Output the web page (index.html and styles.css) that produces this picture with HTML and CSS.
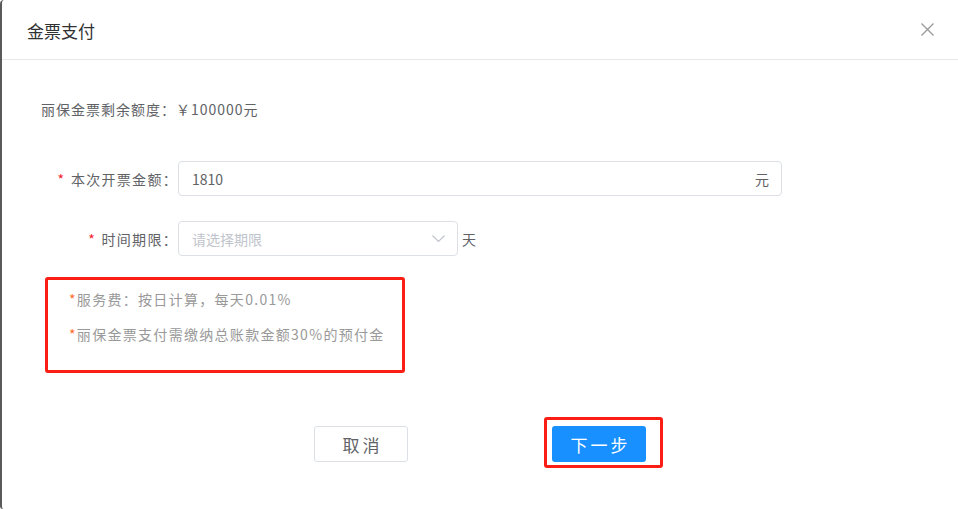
FILE: index.html
```html
<!DOCTYPE html>
<html lang="zh-CN">
<head>
    <meta charset="UTF-8">
    <meta name="viewport" content="width=device-width, initial-scale=1.0">
    <title>金票支付</title>
    <link rel="stylesheet" href="styles.css">
</head>
<body>
    <div class="dialog">
        <header class="dialog-header">
            <span class="dialog-title">金票支付</span>
            <button class="dialog-close" aria-label="关闭">
                <svg width="13" height="13" viewBox="0 0 13 13">
                    <path d="M0.5 0.5 L12.5 12.5 M12.5 0.5 L0.5 12.5" stroke="#999" stroke-width="1.3" fill="none"/>
                </svg>
            </button>
        </header>

        <main class="dialog-body">
            <p class="balance">丽保金票剩余额度：￥100000元</p>

            <div class="form-row">
                <label class="form-label"><span class="req">*</span> 本次开票金额：</label>
                <div class="input wide">
                    <span class="input-value">1810</span>
                    <span class="input-suffix">元</span>
                </div>
            </div>

            <div class="form-row">
                <label class="form-label"><span class="req">*</span> 时间期限：</label>
                <div class="input narrow">
                    <span class="input-placeholder">请选择期限</span>
                    <svg class="arrow" width="13" height="8" viewBox="0 0 13 8">
                        <path d="M0.5 0.5 L6.5 6.5 L12.5 0.5" stroke="#c0c4cc" stroke-width="1.2" fill="none"/>
                    </svg>
                </div>
                <span class="unit">天</span>
            </div>

            <div class="notice">
                <p><span class="star">*</span>服务费：按日计算，每天0.01%</p>
                <p><span class="star">*</span>丽保金票支付需缴纳总账款金额30%的预付金</p>
            </div>

            <div class="actions">
                <button class="btn btn-cancel">取消</button>
                <div class="mark">
                    <button class="btn btn-primary">下一步</button>
                </div>
            </div>
        </main>
    </div>
</body>
</html>
```

FILE: styles.css
```css
* {
    box-sizing: border-box;
}

body {
    margin: 0;
    background: #fff;
    font-family: "Noto Sans CJK SC", "Noto Sans", sans-serif;
    color: #606266;
}

.dialog {
    height: 509px;
    border-left: 2px solid #5a5a5a;
    border-top-left-radius: 4px;
    border-bottom-left-radius: 3px;
    background: #fff;
}

.dialog-header {
    height: 60px;
    display: flex;
    align-items: center;
    justify-content: space-between;
    padding: 0 24px 0 25px;
    border-bottom: 1px solid #e8e8e8;
}

.dialog-title {
    font-size: 17px;
    color: #303133;
    margin-top: 2px;
}

.dialog-close {
    border: 0;
    background: none;
    padding: 0;
    width: 13px;
    height: 13px;
    cursor: pointer;
    display: flex;
}

.dialog-body {
    padding: 0 0 0 39px;
}

.balance {
    margin: 39px 0 0 0;
    font-size: 14px;
    line-height: 20px;
    letter-spacing: 1px;
}

.form-row {
    display: flex;
    align-items: center;
    margin-top: 42px;
}

.form-row + .form-row {
    margin-top: 25px;
}

.form-label {
    width: 137px;
    text-align: right;
    font-size: 14px;
    letter-spacing: 1.3px;
    white-space: nowrap;
}

.req {
    color: #f5222d;
    margin-right: 1px;
}

.input {
    height: 35px;
    border: 1px solid #dcdfe6;
    border-radius: 4px;
    display: flex;
    align-items: center;
    justify-content: space-between;
    padding: 0 12px 0 13px;
    font-size: 14px;
}

.input.wide {
    width: 604px;
}

.input.narrow {
    width: 280px;
}

.input-value {
    color: #606266;
}

.input-suffix {
    color: #606266;
}

.input-placeholder {
    color: #c0c4cc;
}

.arrow {
    display: block;
}

.unit {
    font-size: 14px;
    margin-left: 4px;
}

.notice {
    width: 360px;
    margin: 21px 0 0 4px;
    padding: 2px 0 18px 21px;
    border: 3px solid #fa1e14;
    border-radius: 3px;
    font-size: 14px;
    color: #999;
}

.notice p {
    margin: 0;
    line-height: 35px;
    letter-spacing: 1.3px;
}

.star {
    color: #ff6a2b;
}

.actions {
    display: flex;
    align-items: flex-start;
    margin: 44px 0 0 273px;
}

.btn {
    height: 36px;
    width: 94px;
    border-radius: 3px;
    font-family: inherit;
    font-size: 17px;
    letter-spacing: 3px;
    text-indent: 3px;
    cursor: pointer;
}

.btn-cancel {
    margin-top: 9px;
    background: #fff;
    border: 1px solid #dcdfe6;
    color: #606266;
}

.mark {
    margin-left: 136px;
    padding: 6px 14px 3px 5px;
    border: 3px solid #fa1e14;
    border-radius: 3px;
}

.btn-primary {
    display: block;
    background: #1890ff;
    border: 0;
    color: #fff;
}
```
